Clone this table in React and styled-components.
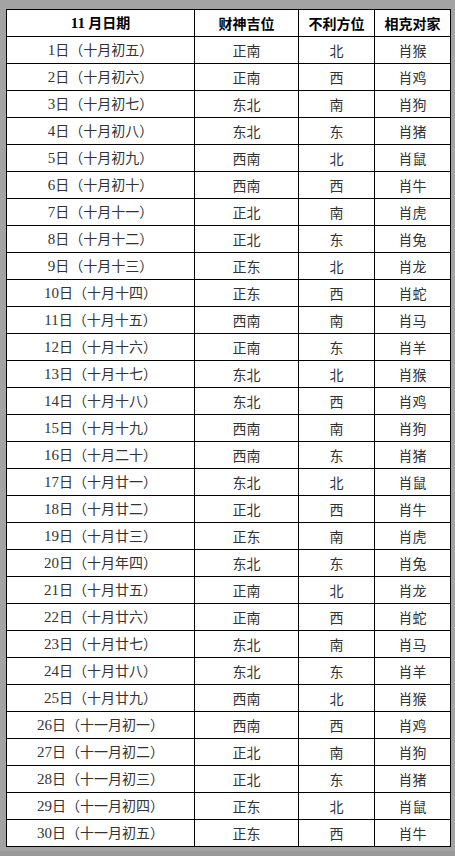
import React from 'react';
import styled, { createGlobalStyle } from 'styled-components';

const rows = [
    ['1', '十月初五', '正南', '北', '肖猴'],
    ['2', '十月初六', '正南', '西', '肖鸡'],
    ['3', '十月初七', '东北', '南', '肖狗'],
    ['4', '十月初八', '东北', '东', '肖猪'],
    ['5', '十月初九', '西南', '北', '肖鼠'],
    ['6', '十月初十', '西南', '西', '肖牛'],
    ['7', '十月十一', '正北', '南', '肖虎'],
    ['8', '十月十二', '正北', '东', '肖兔'],
    ['9', '十月十三', '正东', '北', '肖龙'],
    ['10', '十月十四', '正东', '西', '肖蛇'],
    ['11', '十月十五', '西南', '南', '肖马'],
    ['12', '十月十六', '正南', '东', '肖羊'],
    ['13', '十月十七', '东北', '北', '肖猴'],
    ['14', '十月十八', '东北', '西', '肖鸡'],
    ['15', '十月十九', '西南', '南', '肖狗'],
    ['16', '十月二十', '西南', '东', '肖猪'],
    ['17', '十月廿一', '东北', '北', '肖鼠'],
    ['18', '十月廿二', '正北', '西', '肖牛'],
    ['19', '十月廿三', '正东', '南', '肖虎'],
    ['20', '十月年四', '东北', '东', '肖兔'],
    ['21', '十月廿五', '正南', '北', '肖龙'],
    ['22', '十月廿六', '正南', '西', '肖蛇'],
    ['23', '十月廿七', '东北', '南', '肖马'],
    ['24', '十月廿八', '东北', '东', '肖羊'],
    ['25', '十月廿九', '西南', '北', '肖猴'],
    ['26', '十一月初一', '西南', '西', '肖鸡'],
    ['27', '十一月初二', '正北', '南', '肖狗'],
    ['28', '十一月初三', '正北', '东', '肖猪'],
    ['29', '十一月初四', '正东', '北', '肖鼠'],
    ['30', '十一月初五', '正东', '西', '肖牛'],
];

function App() {
    return (
        <>
            <GlobalStyle />
            <Page>
                <Table>
                    <colgroup>
                        <col style={{ width: 188 }} />
                        <col style={{ width: 104 }} />
                        <col style={{ width: 76 }} />
                        <col style={{ width: 76 }} />
                    </colgroup>
                    <thead>
                        <tr>
                            <Head><Num>11</Num> 月日期</Head>
                            <Head>财神吉位</Head>
                            <Head>不利方位</Head>
                            <Head>相克对家</Head>
                        </tr>
                    </thead>
                    <tbody>
                        {rows.map(([day, lunar, god, bad, clash]) => (
                            <tr key={day}>
                                <Cell><Num>{day}</Num>日（{lunar}）</Cell>
                                <Cell>{god}</Cell>
                                <Cell>{bad}</Cell>
                                <Cell>{clash}</Cell>
                            </tr>
                        ))}
                    </tbody>
                </Table>
                <Shade />
            </Page>
        </>
    )
}

export default App

const GlobalStyle = createGlobalStyle`
    html, body {
        margin: 0;
        background: #a3a3a3;
    }
`

const Page = styled.div`
    width: 455px;
    height: 856px;
    box-sizing: border-box;
    padding: 9px 5px 0 6px;
    background: #a3a3a3;
    display: flex;
    flex-direction: column;
    overflow: hidden;
`

const Table = styled.table`
    width: 444px;
    border-collapse: collapse;
    table-layout: fixed;
    background: #fff;
    font-family: "Noto Sans CJK SC", sans-serif;
    font-size: 14px;
`

const Head = styled.th`
    height: 26px;
    padding: 0;
    border: 1px solid #000;
    text-align: center;
    font-weight: bold;
    color: #000;
    line-height: 1;
`

const Cell = styled.td`
    height: 26px;
    padding: 0;
    border: 1px solid #000;
    text-align: center;
    color: #333;
    line-height: 1;
`

const Num = styled.span`
    font-family: "Liberation Serif", serif;
    font-size: 15px;
`

const Shade = styled.div`
    margin-top: auto;
    height: 5px;
    margin-left: -6px;
    margin-right: -5px;
    background: #989898;
`
